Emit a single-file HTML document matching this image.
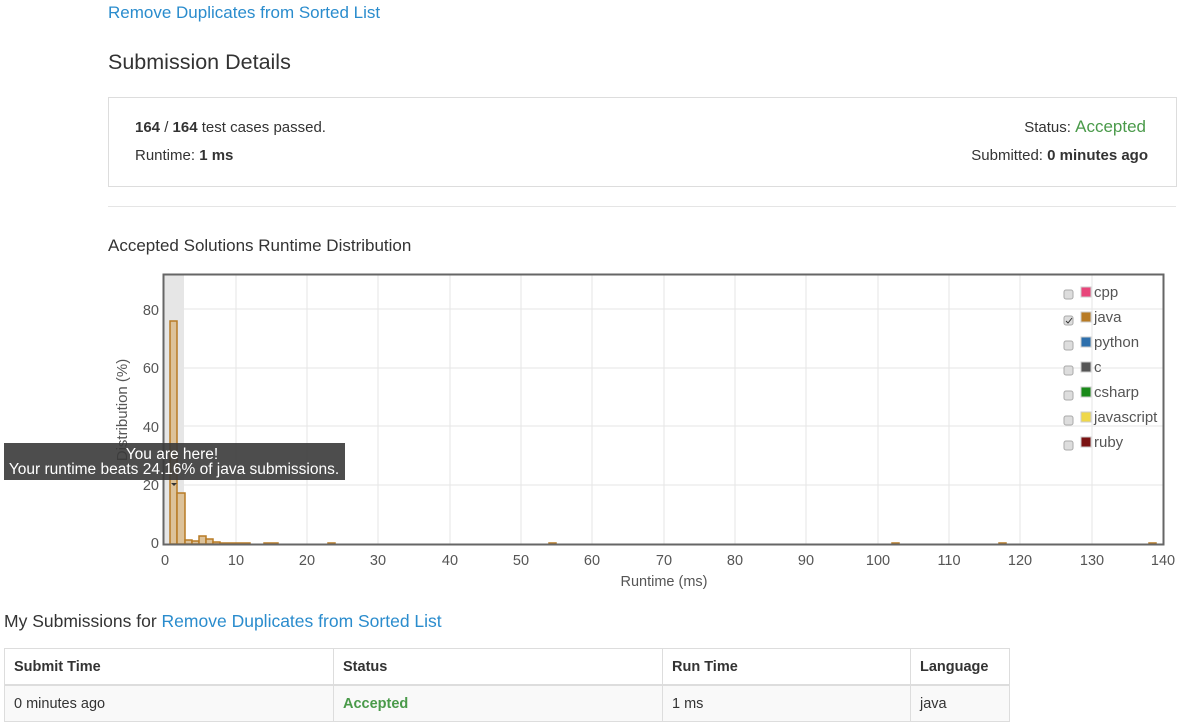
<!DOCTYPE html><html><head><style>
body{margin:0;width:1178px;height:724px;background:#fff;font-family:"Liberation Sans",sans-serif;color:#333;position:relative;overflow:hidden}
.a{color:#2a8ccd}
div,span{position:absolute}
table{position:absolute;left:4px;top:648px;border-collapse:collapse;font-size:14.5px;width:1006px}
td,th{border:1px solid #ddd;text-align:left;padding:0 9px;height:35px}
th{font-weight:bold;border-bottom:2px solid #ddd}
</style></head><body>
<div class="a" style="left:108px;top:3px;font-size:17px">Remove Duplicates from Sorted List</div>
<div style="left:108px;top:50px;font-size:21.5px">Submission Details</div>
<div style="left:108px;top:97px;width:1067px;height:88px;border:1px solid #ddd"></div>
<div style="left:135px;top:119px;font-size:15px"><b>164</b> / <b>164</b> test cases passed.</div>
<div style="left:135px;top:147px;font-size:15px">Runtime: <b>1 ms</b></div>
<div style="right:32px;top:117px;font-size:15px">Status: <span style="position:static;font-size:17px;color:#4a9a4a">Accepted</span></div>
<div style="right:30px;top:147px;font-size:15px">Submitted: <b>0 minutes ago</b></div>
<div style="left:108px;top:206px;width:1068px;border-top:1px solid #e5e5e5"></div>
<div style="left:108px;top:236px;font-size:17px">Accepted Solutions Runtime Distribution</div>
<svg style="position:absolute;left:0;top:260px" width="1178" height="330" font-family="Liberation Sans" font-size="14.5" fill="#555">
<rect x="164" y="15" width="20" height="270" fill="#e6e6e6"/>
<g stroke="#e6e6e6">
<line x1="164" x2="1164" y1="49" y2="49"/><line x1="164" x2="1164" y1="108" y2="108"/><line x1="164" x2="1164" y1="166" y2="166"/><line x1="164" x2="1164" y1="225" y2="225"/>
<line x1="236" x2="236" y1="15" y2="284"/><line x1="307" x2="307" y1="15" y2="284"/><line x1="378" x2="378" y1="15" y2="284"/><line x1="450" x2="450" y1="15" y2="284"/><line x1="521" x2="521" y1="15" y2="284"/><line x1="592" x2="592" y1="15" y2="284"/><line x1="664" x2="664" y1="15" y2="284"/><line x1="735" x2="735" y1="15" y2="284"/><line x1="806" x2="806" y1="15" y2="284"/><line x1="878" x2="878" y1="15" y2="284"/><line x1="949" x2="949" y1="15" y2="284"/><line x1="1020" x2="1020" y1="15" y2="284"/><line x1="1092" x2="1092" y1="15" y2="284"/>
</g>
<g fill="#dcc29a" stroke="#b87b25" stroke-width="1.5">
<rect x="170" y="61" width="7" height="223"/><rect x="177" y="233" width="8" height="51"/>
<rect x="185" y="280" width="7" height="4"/><rect x="192" y="281" width="7" height="3"/><rect x="199" y="276" width="7" height="8"/><rect x="206" y="279" width="7" height="5"/><rect x="213" y="282" width="7" height="2"/><rect x="220" y="283" width="30" height="1"/>
<rect x="264" y="283" width="14" height="1"/><rect x="328" y="283" width="7" height="1"/><rect x="549" y="283" width="7" height="1"/><rect x="892" y="283" width="7" height="1"/><rect x="999" y="283" width="7" height="1"/><rect x="1149" y="283" width="7" height="1"/>
</g>
<rect x="163.5" y="14.5" width="1000" height="270" fill="none" stroke="#666" stroke-width="2"/>
<g text-anchor="end"><text x="159" y="55">80</text><text x="159" y="113">60</text><text x="159" y="172">40</text><text x="159" y="230">20</text><text x="159" y="288">0</text></g>
<g text-anchor="middle"><text x="165" y="305">0</text><text x="236" y="305">10</text><text x="307" y="305">20</text><text x="378" y="305">30</text><text x="450" y="305">40</text><text x="521" y="305">50</text><text x="592" y="305">60</text><text x="664" y="305">70</text><text x="735" y="305">80</text><text x="806" y="305">90</text><text x="878" y="305">100</text><text x="949" y="305">110</text><text x="1020" y="305">120</text><text x="1092" y="305">130</text><text x="1163" y="305">140</text>
<text x="664" y="326">Runtime (ms)</text>
<text transform="translate(127,150) rotate(-90)" font-size="15">Distribution (%)</text></g>
<g font-size="15" fill="#555">
<g fill="#ddd" stroke="#aaa"><rect x="1064" y="30" width="9" height="9" rx="2"/><rect x="1064" y="56" width="9" height="9" rx="2"/><rect x="1064" y="81" width="9" height="9" rx="2"/><rect x="1064" y="106" width="9" height="9" rx="2"/><rect x="1064" y="131" width="9" height="9" rx="2"/><rect x="1064" y="156" width="9" height="9" rx="2"/><rect x="1064" y="181" width="9" height="9" rx="2"/></g>
<path d="M1066 61l2 2 4-5" stroke="#333" fill="none"/>
<g stroke="#ccc"><rect x="1081" y="27" width="10" height="10" fill="#e8457a"/><rect x="1081" y="52" width="10" height="10" fill="#b87b25"/><rect x="1081" y="77" width="10" height="10" fill="#2d6fac"/><rect x="1081" y="102" width="10" height="10" fill="#555"/><rect x="1081" y="127" width="10" height="10" fill="#1a8a1a"/><rect x="1081" y="152" width="10" height="10" fill="#efd84a"/><rect x="1081" y="177" width="10" height="10" fill="#7a1212"/></g>
<text x="1094" y="37">cpp</text><text x="1094" y="62">java</text><text x="1094" y="87">python</text><text x="1094" y="112">c</text><text x="1094" y="137">csharp</text><text x="1094" y="162">javascript</text><text x="1094" y="187">ruby</text></g>
<rect x="4" y="183" width="341" height="37" fill="#3a3a3a" opacity="0.9"/>
<g fill="#fff" font-size="15.5" text-anchor="middle"><text x="172" y="199">You are here!</text><text x="174" y="214">Your runtime beats 24.16% of java submissions.</text></g>
<path d="M171 223l3 3 3-3z" fill="#333"/>
</svg>
<div style="left:4px;top:611px;font-size:17.5px">My Submissions for <span class="a" style="position:static">Remove Duplicates from Sorted List</span></div>
<table><tr><th style="width:310px">Submit Time</th><th style="width:310px">Status</th><th style="width:229px">Run Time</th><th>Language</th></tr>
<tr style="background:#f9f9f9"><td>0 minutes ago</td><td style="color:#4a9a4a;font-weight:bold">Accepted</td><td>1 ms</td><td>java</td></tr></table>
</body></html>
